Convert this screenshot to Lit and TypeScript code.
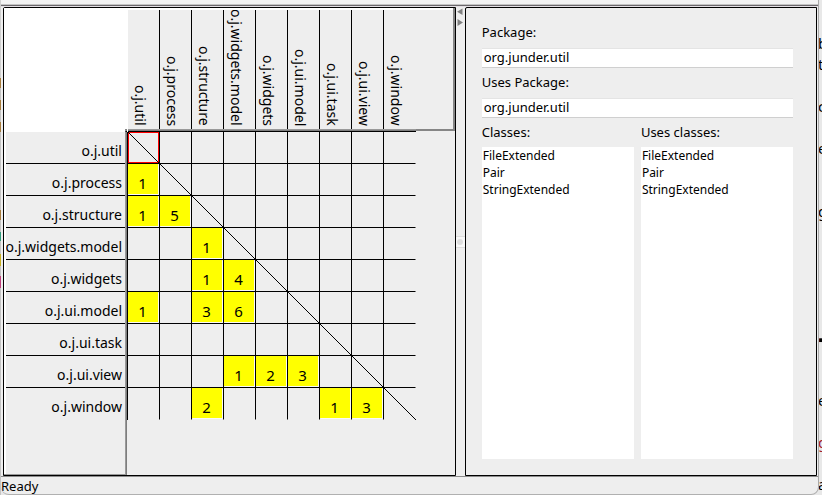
import { LitElement, html, css, svg, nothing } from "lit";
import { customElement, property, state } from "lit/decorators.js";
import { classMap } from "lit/directives/class-map.js";

interface Scrap {
  top: number;
  text: string;
  link?: boolean;
}

const PACKAGES = [
  "o.j.util",
  "o.j.process",
  "o.j.structure",
  "o.j.widgets.model",
  "o.j.widgets",
  "o.j.ui.model",
  "o.j.ui.task",
  "o.j.ui.view",
  "o.j.window",
];

// USES[row][column] = number of dependencies, 0 for none
const USES = [
  [0, 0, 0, 0, 0, 0, 0, 0, 0],
  [1, 0, 0, 0, 0, 0, 0, 0, 0],
  [1, 5, 0, 0, 0, 0, 0, 0, 0],
  [0, 0, 1, 0, 0, 0, 0, 0, 0],
  [0, 0, 1, 4, 0, 0, 0, 0, 0],
  [1, 0, 3, 6, 0, 0, 0, 0, 0],
  [0, 0, 0, 0, 0, 0, 0, 0, 0],
  [0, 0, 0, 1, 2, 3, 0, 0, 0],
  [0, 0, 2, 0, 0, 0, 1, 3, 0],
];

const CLASSES = ["FileExtended", "Pair", "StringExtended"];

@customElement("dependency-matrix")
export class DependencyMatrix extends LitElement {
  @state() private selected = [0, 0];

  static styles = css`
    :host {
      display: block;
      height: 100%;
      overflow: hidden;
    }
    table {
      width: 100%;
      height: 100%;
      table-layout: fixed;
      border-collapse: separate;
      border-spacing: 0;
    }
    th,
    td {
      padding: 0;
      font-weight: 400;
      font-size: 14px;
      line-height: 20px;
      box-sizing: border-box;
    }
    .labels {
      width: 124px;
    }
    .unit {
      width: 32px;
    }
    .corner {
      height: 124px;
      background: #fff;
      border-right: 1px solid #fff;
      vertical-align: bottom;
    }
    .edge {
      height: 3px;
      margin-left: 121px;
      box-sizing: border-box;
      border-top: 2px solid #858585;
      border-left: 1px solid #999;
      border-bottom: 1px solid #000;
    }
    .col {
      height: 124px;
      border-bottom: 1px solid #000;
      background: linear-gradient(#999 1px, #7d7d7d 1px) bottom / 100% 2px no-repeat;
      vertical-align: top;
    }
    .vertical {
      display: flex;
      justify-content: flex-end;
      box-sizing: border-box;
      width: 32px;
      height: 119px;
      margin-top: 2px;
      padding: 0 9px 3px 0;
      border-right: 1px solid #000;
      writing-mode: vertical-rl;
      overflow: hidden;
      white-space: nowrap;
    }
    .vertical.last {
      border-right-color: transparent;
    }
    .rest {
      height: 124px;
      vertical-align: top;
    }
    .rest div {
      height: 123px;
      box-sizing: border-box;
      border-right: 2px solid #858585;
      border-bottom: 2px solid #858585;
    }
    thead tr {
      background: linear-gradient(#fff 2px, transparent 2px);
    }
    .row {
      height: 32px;
      border-right: 1px solid #000;
      background:
        linear-gradient(90deg, #999 1px, #7d7d7d 1px) right / 2px 100% no-repeat,
        linear-gradient(#fff, #fff) left / 2px 100% no-repeat;
    }
    .horizontal {
      display: flex;
      justify-content: flex-end;
      box-sizing: border-box;
      height: 32px;
      margin: 0 2px 0 2px;
      padding: 9px 3px 0 0;
      border-bottom: 1px solid #000;
      overflow: hidden;
      white-space: nowrap;
    }
    .horizontal.last {
      border-bottom-color: transparent;
    }
    .cell {
      position: relative;
      height: 32px;
      border-right: 1px solid #000;
      border-bottom: 1px solid #000;
      text-align: center;
      vertical-align: top;
    }
    .cell.lastcol {
      border-right-color: transparent;
    }
    .cell.lastrow {
      border-bottom-color: transparent;
    }
    .count {
      height: 30px;
      margin: 0 1px 1px 0;
      padding: 9px 1px 0 0;
      box-sizing: border-box;
      background: #ff0;
      box-shadow: 1px 1px 0 #fafafa;
      font-size: 15px;
    }
    .outline {
      height: 31px;
      box-sizing: border-box;
      border: 1px solid #f00;
    }
    .diagonal {
      position: absolute;
      top: 0;
      left: 0;
      width: 32px;
      height: 32px;
    }
    .side {
      background:
        linear-gradient(#999, #999) 0 100% / 122px 1px no-repeat,
        linear-gradient(90deg, #999 1px, #7d7d7d 1px) 121px 0 / 2px 100% no-repeat,
        linear-gradient(#fff, #fff) left / 2px 100% no-repeat;
    }
  `;

  private cell(count: number, r: number, c: number) {
    const last = PACKAGES.length - 1;
    const selected = r === this.selected[0] && c === this.selected[1];
    const classes = { cell: true, lastrow: r === last, lastcol: c === last };
    return html`<td class=${classMap(classes)} @click=${() => (this.selected = [r, c])}>
      ${count ? html`<div class="count">${count}</div>` : nothing}
      ${r === c
        ? html`<svg class="diagonal" viewBox="0 0 32 32" aria-hidden="true">
            ${svg`<path d="M0 0L32 32" stroke="#000" stroke-width="1" fill="none"/>`}
          </svg>`
        : nothing}
      ${selected && !count ? html`<div class="outline"></div>` : nothing}
    </td>`;
  }

  render() {
    const last = PACKAGES.length - 1;
    return html`<table>
      <colgroup>
        <col class="labels" />
        ${PACKAGES.map(() => html`<col class="unit" />`)}
        <col />
      </colgroup>
      <thead>
        <tr>
          <td class="corner"><div class="edge"></div></td>
          ${PACKAGES.map(
            (name, i) => html`<th class="col" scope="col">
              <div class=${classMap({ vertical: true, last: i === last })}>${name}</div>
            </th>`
          )}
          <td class="rest"><div></div></td>
        </tr>
      </thead>
      <tbody>
        ${PACKAGES.map(
          (name, r) => html`<tr>
            <th class="row" scope="row">
              <div class=${classMap({ horizontal: true, last: r === last })}>${name}</div>
            </th>
            ${USES[r].map((n, c) => this.cell(n, r, c))}
            <td></td>
          </tr>`
        )}
        <tr>
          <td class="side"></td>
          <td colspan="10"></td>
        </tr>
      </tbody>
    </table>`;
  }
}

@customElement("package-details")
export class PackageDetails extends LitElement {
  @property() name = "";
  @property() uses = "";

  static styles = css`
    :host {
      display: flex;
      flex-direction: column;
      box-sizing: border-box;
      height: 100%;
      padding: 15px 23px 16px 16px;
      font-size: 13px;
    }
    label {
      height: 20px;
      line-height: 18px;
      flex: none;
    }
    input {
      box-sizing: border-box;
      width: 100%;
      height: 20px;
      margin: 5px 0;
      padding: 0 2px 2px;
      flex: none;
      border: 0;
      border-top: 1px solid #e4e4e4;
      border-bottom: 1px solid #cfcfcf;
      background: #fff;
      color: #000;
      font: inherit;
      outline: none;
    }
    .lists {
      display: flex;
      flex: 1;
      gap: 7px;
      min-height: 0;
    }
    .list {
      display: flex;
      flex: 1;
      flex-direction: column;
      gap: 4px;
      min-width: 0;
    }
    select {
      flex: 1;
      min-height: 0;
      margin: 0;
      padding: 0;
      border: 0;
      border-radius: 0;
      background: #fff;
      color: #000;
      font: inherit;
      font-size: 12px;
      outline: none;
      overflow: hidden;
    }
    option {
      height: 17px;
      min-height: 17px;
      padding: 0 1px;
      line-height: 17px;
      box-sizing: border-box;
    }
  `;

  render() {
    const options = CLASSES.map((c) => html`<option>${c}</option>`);
    return html`
      <label for="package">Package:</label>
      <input id="package" type="text" .value=${this.name} />
      <label for="uses">Uses Package:</label>
      <input id="uses" type="text" .value=${this.uses} />
      <div class="lists">
        <div class="list">
          <label for="classes">Classes:</label>
          <select id="classes" multiple>${options}</select>
        </div>
        <div class="list">
          <label for="used">Uses classes:</label>
          <select id="used" multiple>${options}</select>
        </div>
      </div>
    `;
  }
}

@customElement("app-root")
export class AppRoot extends LitElement {
  // Slivers of the document behind the window
  private scraps: Scrap[] = [
    { top: 33, text: "b" },
    { top: 54, text: "t" },
    { top: 96, text: "c" },
    { top: 138, text: "e" },
    { top: 201, text: "g" },
    { top: 329, text: "▪" },
    { top: 390, text: "e" },
    { top: 432, text: "g", link: true },
    { top: 474, text: "a" },
  ];

  static styles = css`
    :host {
      display: flex;
      height: 100vh;
      overflow: hidden;
      background: #e8e8e8;
      color: #000;
      font-family: "Noto Sans", "Open Sans", sans-serif;
    }
    .left {
      flex: none;
      width: 1px;
      background: linear-gradient(
        #d0d0d0 78px, #a87c3c 78px, #a87c3c 88px, #c4c4c4 88px, #c4c4c4 100px,
        #a87c3c 100px, #a87c3c 110px, #c4c4c4 110px, #c4c4c4 122px, #a87c3c 122px,
        #a87c3c 132px, #c4c4c4 132px, #c4c4c4 210px, #a87c3c 210px, #a87c3c 220px,
        #c4c4c4 220px, #c4c4c4 232px, #2f9c7c 232px, #2f9c7c 241px, #c4c4c4 241px,
        #c4c4c4 254px, #c8b020 254px, #c8b020 266px, #c4c4c4 266px, #c4c4c4 276px,
        #c0407c 276px, #c0407c 288px, #c4c4c4 288px
      );
    }
    .right {
      position: relative;
      flex: none;
      width: 3px;
      overflow: hidden;
      background: #e8e8e8;
      font-size: 15px;
      line-height: 20px;
    }
    .scrap {
      position: absolute;
      left: -1px;
    }
    .scrap.link {
      color: #a02028;
      text-decoration: underline double;
    }
    .window {
      display: flex;
      flex: 1;
      flex-direction: column;
      min-width: 0;
      box-sizing: border-box;
      border-right: 1px solid #a8a8a8;
      border-bottom: 1px solid #b0b0b0;
      border-radius: 0 0 8px 8px;
      background: #eee;
      overflow: hidden;
    }
    .bar {
      flex: none;
      box-sizing: border-box;
      height: 7px;
      border-bottom: 1px solid #e4e0e4;
      background: linear-gradient(#f3f3f3 4px, #c4c4c4 4px, #c4c4c4 5px, #6c686c 5px);
    }
    .split {
      display: flex;
      flex: 1;
      min-height: 0;
      padding: 0 1px 0 2px;
    }
    .pane {
      box-sizing: border-box;
      min-width: 0;
      border: 1px solid #000;
      border-top-left-radius: 2px;
    }
    .matrix {
      flex: 453 1 0;
    }
    .details {
      flex: 352 1 0;
    }
    .divider {
      display: flex;
      flex: none;
      flex-direction: column;
      align-items: center;
      justify-content: space-between;
      width: 9px;
    }
    .arrows,
    .grip {
      display: block;
      width: 9px;
    }
    .spacer {
      height: 28px;
    }
    .status {
      flex: none;
      box-sizing: border-box;
      height: 18px;
      border-top: 1px solid #8c8c8c;
      font-size: 13px;
      line-height: 18px;
    }
  `;

  render() {
    return html`
      <div class="left"></div>
      <main class="window">
        <div class="bar"></div>
        <div class="split">
          <section class="pane matrix"><dependency-matrix></dependency-matrix></section>
          <div class="divider">
            <svg class="arrows" height="28" viewBox="0 0 9 28" aria-hidden="true">
              <path d="M6.500 1.500V8L1 4.700Z" fill="#808080" />
              <path d="M1.500 12V19L7 15.500Z" fill="#808080" />
            </svg>
            <svg class="grip" height="12" viewBox="0 0 9 12" aria-hidden="true">
              <rect width="9" height="12" fill="#f8f8f8" />
              <path d="M0 .5H9M0 11.500H9" stroke="#ddd" />
              <circle cx="4" cy="6" r="3" fill="#ddd" />
            </svg>
            <div class="spacer"></div>
          </div>
          <section class="pane details">
            <package-details name="org.junder.util" uses="org.junder.util"></package-details>
          </section>
        </div>
        <footer class="status">Ready</footer>
      </main>
      <div class="right" aria-hidden="true">
        ${this.scraps.map(
          (s) => html`<span
            class=${classMap({ scrap: true, link: !!s.link })}
            style="top:${s.top}px"
            >${s.text}</span
          >`
        )}
      </div>
    `;
  }
}
